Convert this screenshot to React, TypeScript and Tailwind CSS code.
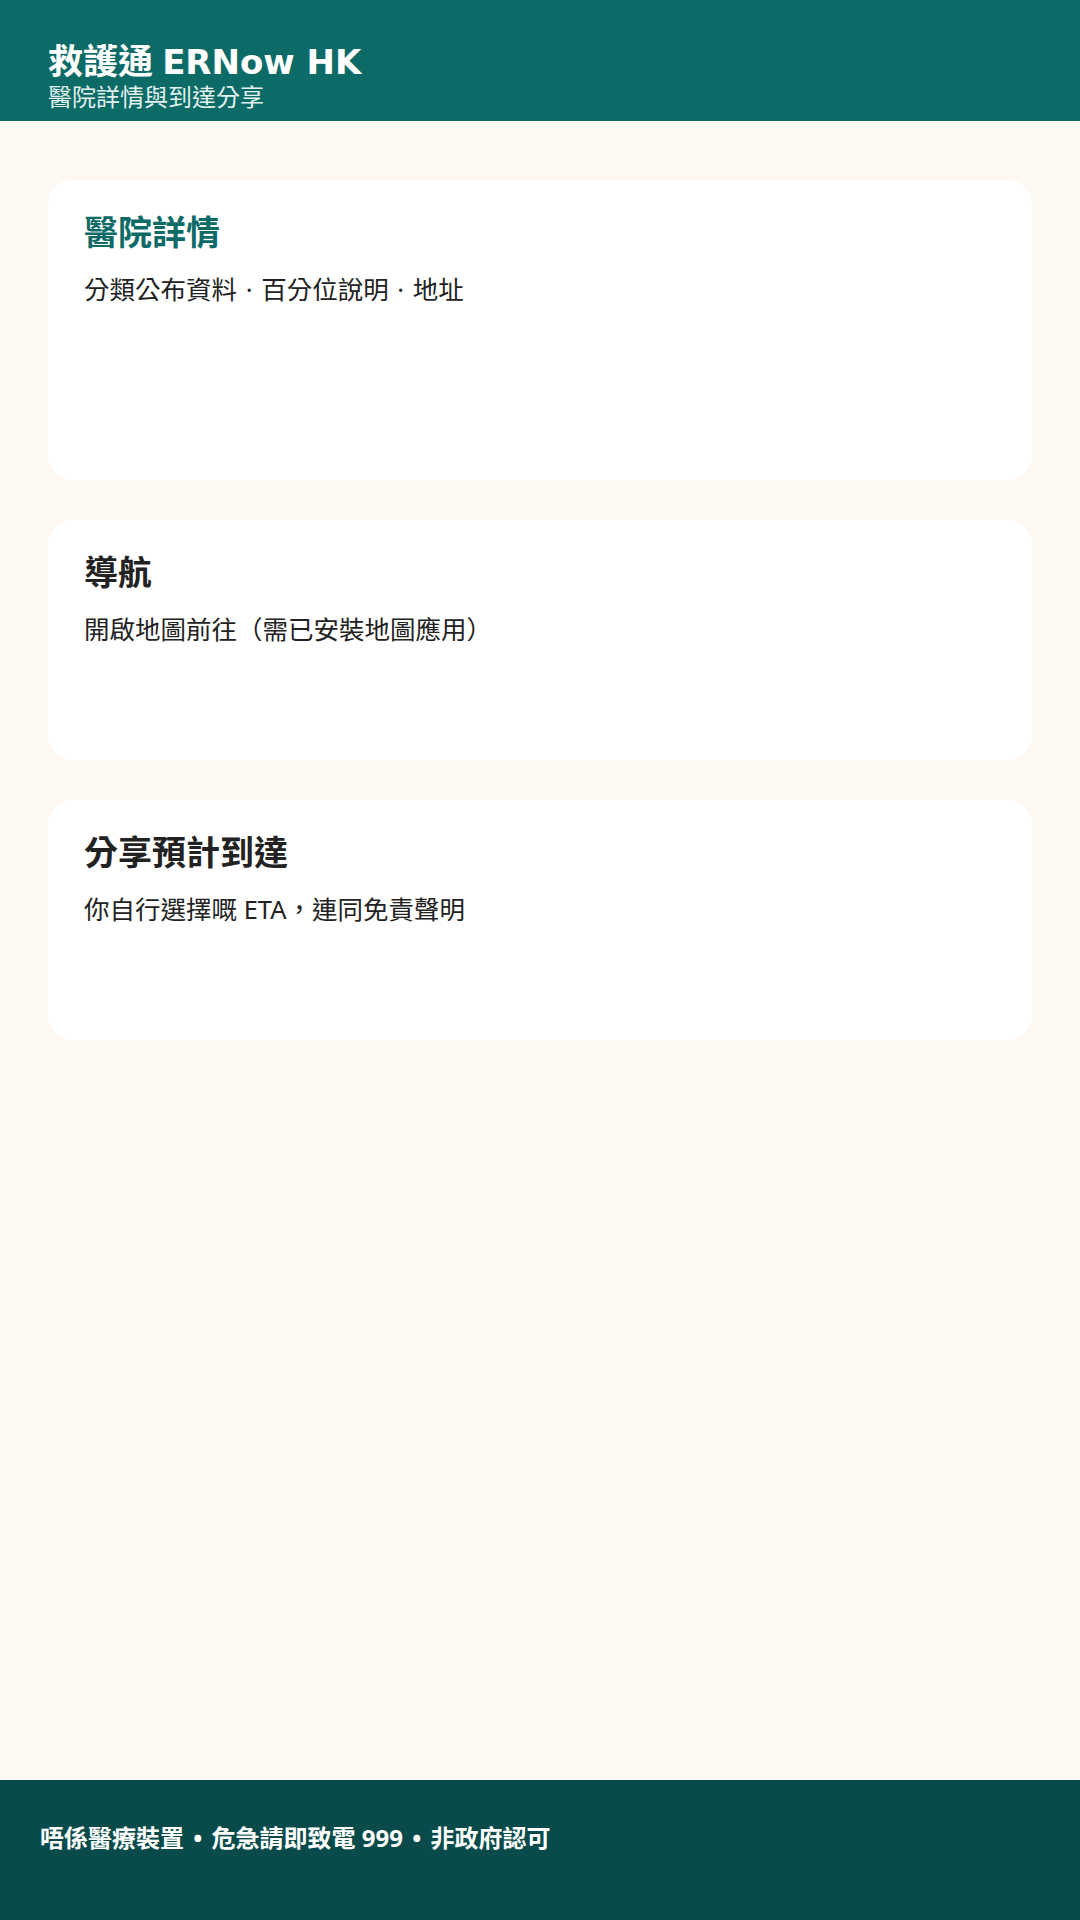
const font = "font-['Noto_Sans','Noto_Sans_CJK_TC',sans-serif]";

interface SectionCardProps {
  title: string;
  subtitle: string[];
  accent?: boolean;
  tall?: boolean;
}

function SectionCard({ title, subtitle, accent, tall }: SectionCardProps) {
  return (
    <section
      className={`rounded-[24px] bg-white px-[36px] pt-[28px] ${tall ? "h-[300px]" : "h-[240px]"}`}
    >
      <h2
        className={`text-[34px] font-bold leading-[48px] ${accent ? "text-[#0c6b67]" : "text-[#222222]"}`}
      >
        {title}
      </h2>
      <p className="mt-[15px] text-[25.5px] leading-[36px] text-[#222222]">
        {subtitle.map((part, i) => (
          <span key={part}>
            {i > 0 ? <span className="mx-[2px]"> · </span> : null}
            {part}
          </span>
        ))}
      </p>
    </section>
  );
}

const disclaimers = ["唔係醫療裝置", "危急請即致電 999", "非政府認可"];

export default function App() {
  return (
    <div className={`flex h-[1920px] w-[1080px] flex-col bg-[#fdf8f2] ${font}`}>
      <header className="h-[121px] shrink-0 bg-[#0c6b67] px-[48px] pt-[41px]">
        <h1 className="text-[35px] font-bold leading-[40px] text-white">
          救護通{" "}
          <span className="font-['DejaVu_Sans',sans-serif] text-[34px]">ERNow HK</span>
        </h1>
        <p className="mt-[1px] text-[24px] leading-[28px] text-[#e3f1ef]">醫院詳情與到達分享</p>
      </header>

      <main className="flex flex-1 flex-col gap-[40px] px-[48px] pt-[59px]">
        <SectionCard
          title="醫院詳情"
          subtitle={["分類公布資料", "百分位說明", "地址"]}
          accent
          tall
        />
        <SectionCard title="導航" subtitle={["開啟地圖前往（需已安裝地圖應用）"]} />
        <SectionCard title="分享預計到達" subtitle={["你自行選擇嘅 ETA，連同免責聲明"]} />
      </main>

      <footer className="h-[140px] shrink-0 bg-[#084b4a] px-[40px] pt-[42px]">
        <p className="text-[24px] font-bold leading-[32px] text-white">
          {disclaimers.map((item, i) => (
            <span key={item}>
              {i > 0 ? <span className="mx-[3px]"> • </span> : null}
              {item}
            </span>
          ))}
        </p>
      </footer>
    </div>
  );
}
